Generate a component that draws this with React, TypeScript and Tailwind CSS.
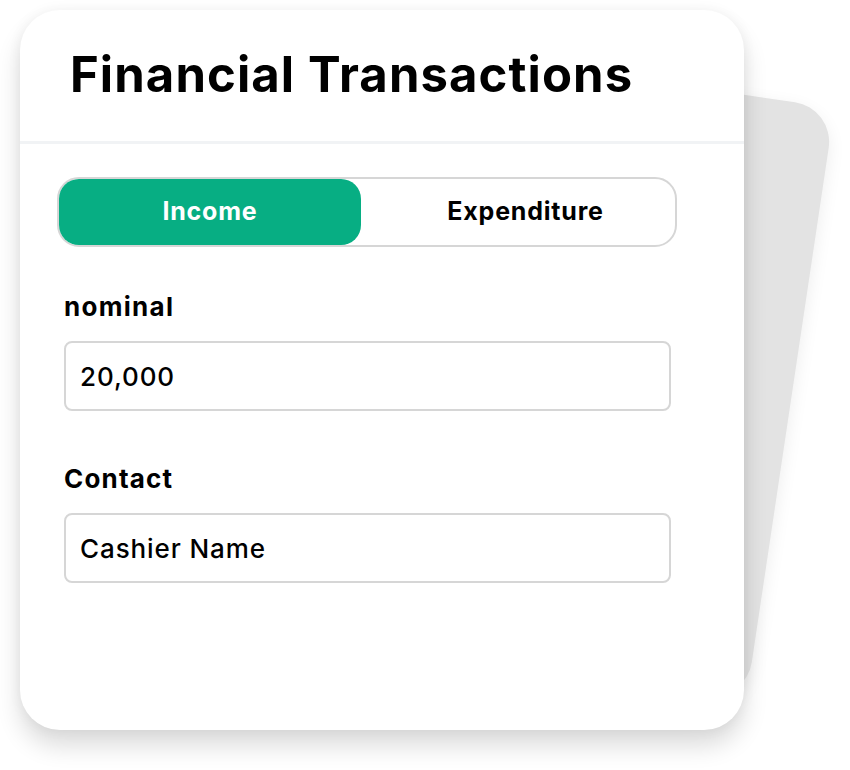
import { useState } from "react";

export default function App() {
  const [type, setType] = useState<"income" | "expenditure">("income");

  return (
    <main className="relative h-[770px] w-[850px] overflow-hidden bg-white pl-[20px] pt-[10px] font-['Inter',sans-serif] text-black">
      {/* card behind */}
      <div className="absolute left-[293px] top-[68px] h-[600px] w-[500px] rotate-[8.5deg] rounded-[40px] bg-[#e3e3e3] shadow-[0_6px_18px_rgba(0,0,0,0.08)]" />

      <div className="relative h-[720px] w-[724px] rounded-[40px] bg-white shadow-[0_16px_24px_rgba(0,0,0,0.14),0_0_14px_rgba(0,0,0,0.05)]">
        <div className="flex h-[134px] items-center border-b-[3px] border-[#f1f3f5] pl-[50px] pb-[2px]">
          <h1 className="text-[49px] font-bold tracking-[1.1px]">Financial Transactions</h1>
        </div>

        <div className="pl-[37px] pt-[33px]">
          <div className="flex h-[70px] w-[620px] rounded-[22px] border-2 border-[#d6d6d6] text-[25px] font-bold tracking-[0.8px]">
            <button
              type="button"
              onClick={() => setType("income")}
              className={`h-full w-[302px] rounded-[20px] ${
                type === "income" ? "bg-[#07ae83] text-white" : "text-black"
              }`}
            >
              Income
            </button>
            <button
              type="button"
              onClick={() => setType("expenditure")}
              className={`h-full flex-1 rounded-[20px] pl-[15px] ${
                type === "expenditure" ? "bg-[#07ae83] text-white" : "text-black"
              }`}
            >
              Expenditure
            </button>
          </div>
        </div>

        <div className="pl-[44px] pt-[45px]">
          <label className="block text-[26px] font-bold leading-[30px] tracking-[1.3px]">nominal</label>
          <input
            defaultValue="20,000"
            className="mt-[19px] h-[70px] w-[607px] rounded-[8px] border-2 border-[#d6d6d6] px-[14px] text-[26px] font-medium tracking-[0.9px] outline-none"
          />

          <label className="mt-[53px] block text-[26px] font-bold leading-[30px] tracking-[1.2px]">Contact</label>
          <input
            defaultValue="Cashier Name"
            className="mt-[19px] h-[70px] w-[607px] rounded-[8px] border-2 border-[#d6d6d6] px-[14px] text-[26px] font-medium tracking-[0.9px] outline-none"
          />
        </div>
      </div>
    </main>
  );
}
